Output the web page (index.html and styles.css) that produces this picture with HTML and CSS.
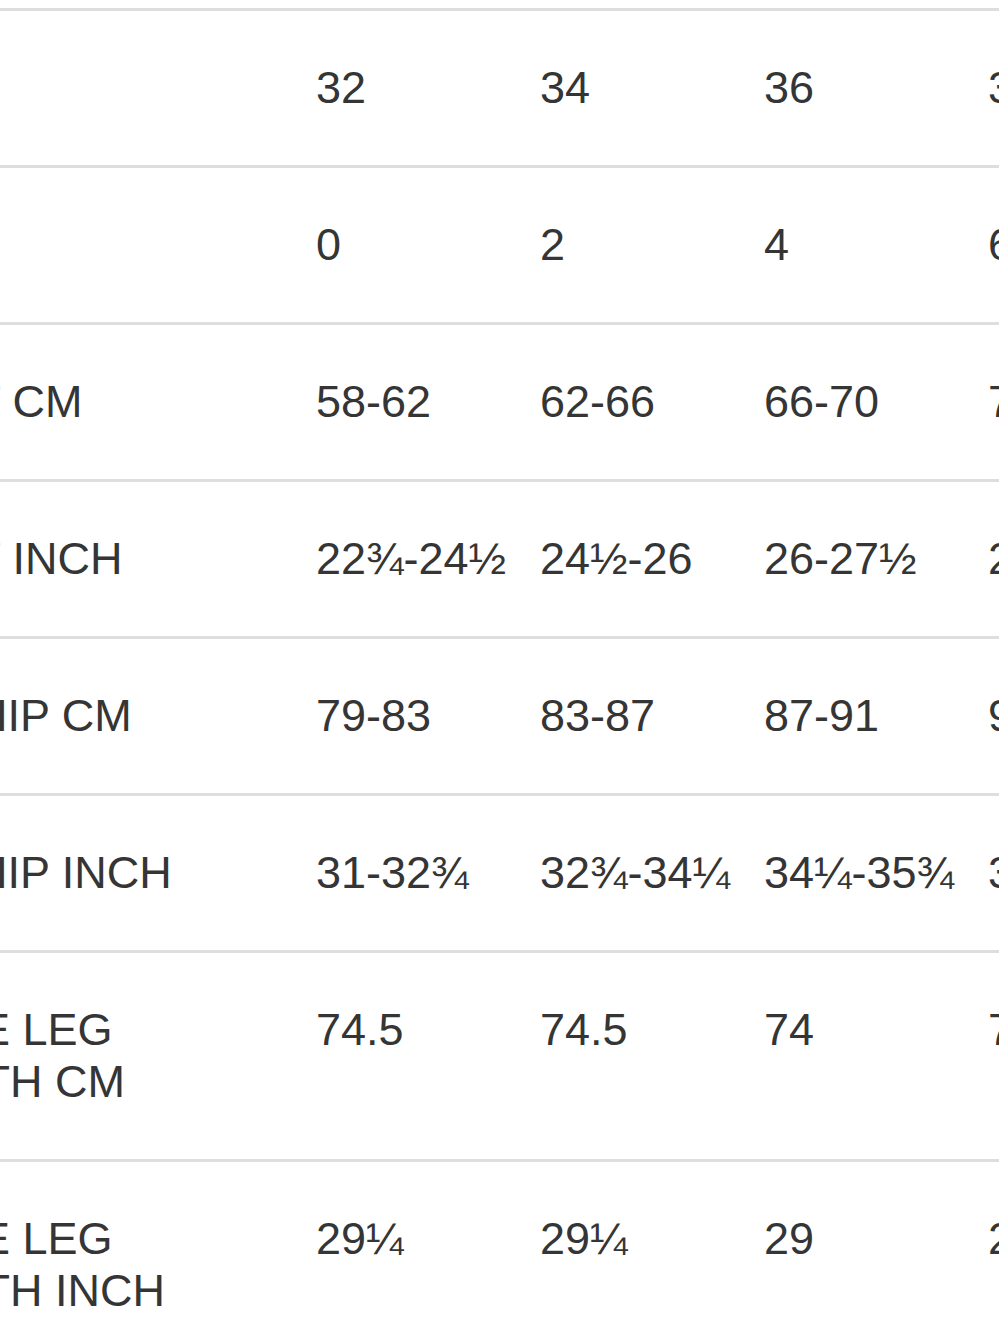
FILE: index.html
```html
<!DOCTYPE html>
<html lang="en">
<head>
<meta charset="utf-8">
<title>Size chart</title>
<link rel="stylesheet" href="styles.css">
</head>
<body>
<div class="viewport">
  <table class="size-chart">
    <colgroup>
      <col class="col-label">
      <col class="col-size"><col class="col-size"><col class="col-size"><col class="col-size"><col class="col-size">
    </colgroup>
    <tbody>
      <tr><td class="label">EU</td><td>32</td><td>34</td><td>36</td><td>38</td><td>40</td></tr>
      <tr><td class="label">US</td><td>0</td><td>2</td><td>4</td><td>6</td><td>8</td></tr>
      <tr><td class="label">WAIST CM</td><td>58-62</td><td>62-66</td><td>66-70</td><td>70-74</td><td>74-78</td></tr>
      <tr><td class="label">WAIST INCH</td><td>22¾-24½</td><td>24½-26</td><td>26-27½</td><td>27½-29</td><td>29-30¾</td></tr>
      <tr><td class="label">LOW HIP CM</td><td>79-83</td><td>83-87</td><td>87-91</td><td>91-95</td><td>95-99</td></tr>
      <tr><td class="label">LOW HIP INCH</td><td>31-32¾</td><td>32¾-34¼</td><td>34¼-35¾</td><td>35¾-37½</td><td>37½-39</td></tr>
      <tr><td class="label">INSIDE LEG<br>LENGTH CM</td><td>74.5</td><td>74.5</td><td>74</td><td>74</td><td>73.5</td></tr>
      <tr><td class="label">INSIDE LEG<br>LENGTH INCH</td><td>29¼</td><td>29¼</td><td>29</td><td>29</td><td>29</td></tr>
    </tbody>
  </table>
</div>
</body>
</html>
```

FILE: styles.css
```css
html, body {
  margin: 0;
  padding: 0;
  background: #ffffff;
  overflow: hidden;
}

.viewport {
  width: 999px;
  height: 1333px;
  overflow: hidden;
  padding-top: 8px;
  box-sizing: border-box;
}

.size-chart {
  margin-left: -140px;
  border-collapse: collapse;
  table-layout: fixed;
  width: 1576px;
  font-family: "Liberation Sans", Arial, Helvetica, sans-serif;
  font-size: 45px;
  line-height: 52px;
  color: #353535;
}

.col-label { width: 456px; }
.col-size { width: 224px; }

.size-chart td {
  border-top: 3px solid #dedede;
  padding: 51px 0;
  vertical-align: top;
  white-space: nowrap;
  text-align: left;
}

.size-chart td.label {
  white-space: normal;
}
```
